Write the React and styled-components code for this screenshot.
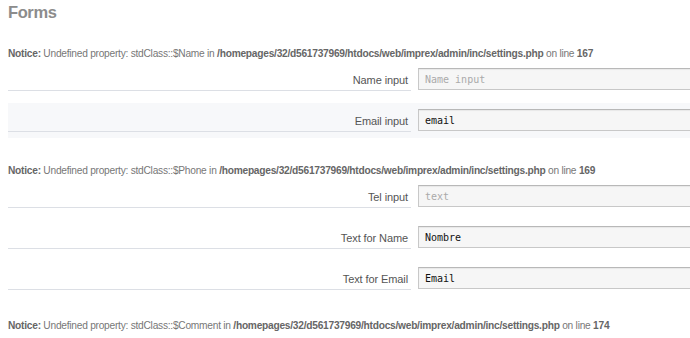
import React from "react";
import styled, { createGlobalStyle } from "styled-components";

const Global = createGlobalStyle`
  html, body { margin: 0; padding: 0; background: #fff; overflow: hidden; }
  body { font-family: "Liberation Sans", Arial, sans-serif; }
`;

const Page = styled.div`
  width: 690px;
  height: 338px;
  overflow: hidden;
  padding: 0 0 0 8px;
  box-sizing: border-box;
`;

const Heading = styled.h2`
  margin: 0;
  height: 28px;
  line-height: 24px;
  font-size: 16.5px;
  letter-spacing: -0.4px;
  font-weight: bold;
  color: #8c8c8c;
`;

const Notice = styled.div`
  margin: ${(p) => p.$top}px 0 1px;
  line-height: 14px;
  font-size: 10.2px;
  letter-spacing: -0.25px;
  color: #777;
  white-space: nowrap;
  b { color: #666; font-weight: bold; }
`;

const Row = styled.div`
  display: flex;
  align-items: flex-start;
  padding: 6px 0;
  margin-bottom: 6px;
  background: ${(p) => (p.$alt ? "#f7f8fa" : "transparent")};
  width: 900px;
`;

const Label = styled.label`
  width: 400px;
  height: 22px;
  padding-right: 3px;
  border-bottom: 1px solid #dcdfe5;
  text-align: right;
  font-size: 11px;
  letter-spacing: -0.1px;
  line-height: 24px;
  color: #555;
  flex: none;
`;

const Input = styled.input`
  margin-left: 7px;
  width: 420px;
  height: 22px;
  box-sizing: border-box;
  border: 1px solid #c8c8c8;
  border-top-color: #b8b8b8;
  background: #f6f6f6;
  box-shadow: inset 0 1px 1px rgba(0, 0, 0, 0.06);
  padding: 0 6px;
  font-family: "DejaVu Sans Mono", Menlo, monospace;
  font-size: 10px;
  color: #111;
  outline: none;
  &::placeholder { color: #aaa; }
`;

const NoticeLine = ({ prop, line, top }) => (
  <Notice $top={top}>
    <b>Notice:</b> Undefined property: stdClass::${prop} in{" "}
    <b>/homepages/32/d561737969/htdocs/web/imprex/admin/inc/settings.php</b> on line{" "}
    <b>{line}</b>
  </Notice>
);

const Field = ({ label, placeholder, value, alt }) => (
  <Row $alt={alt}>
    <Label>{label}</Label>
    <Input placeholder={placeholder} defaultValue={value} readOnly />
  </Row>
);

export default function App() {
  return (
    <Page>
      <Global />
      <Heading>Forms</Heading>
      <NoticeLine prop="Name" line="167" top={19} />
      <Field label="Name input" placeholder="Name input" />
      <Field label="Email input" value="email" alt />
      <NoticeLine prop="Phone" line="169" top={26} />
      <Field label="Tel input" placeholder="text" />
      <Field label="Text for Name" value="Nombre" />
      <Field label="Text for Email" value="Email" />
      <NoticeLine prop="Comment" line="174" top={23} />
    </Page>
  );
}
